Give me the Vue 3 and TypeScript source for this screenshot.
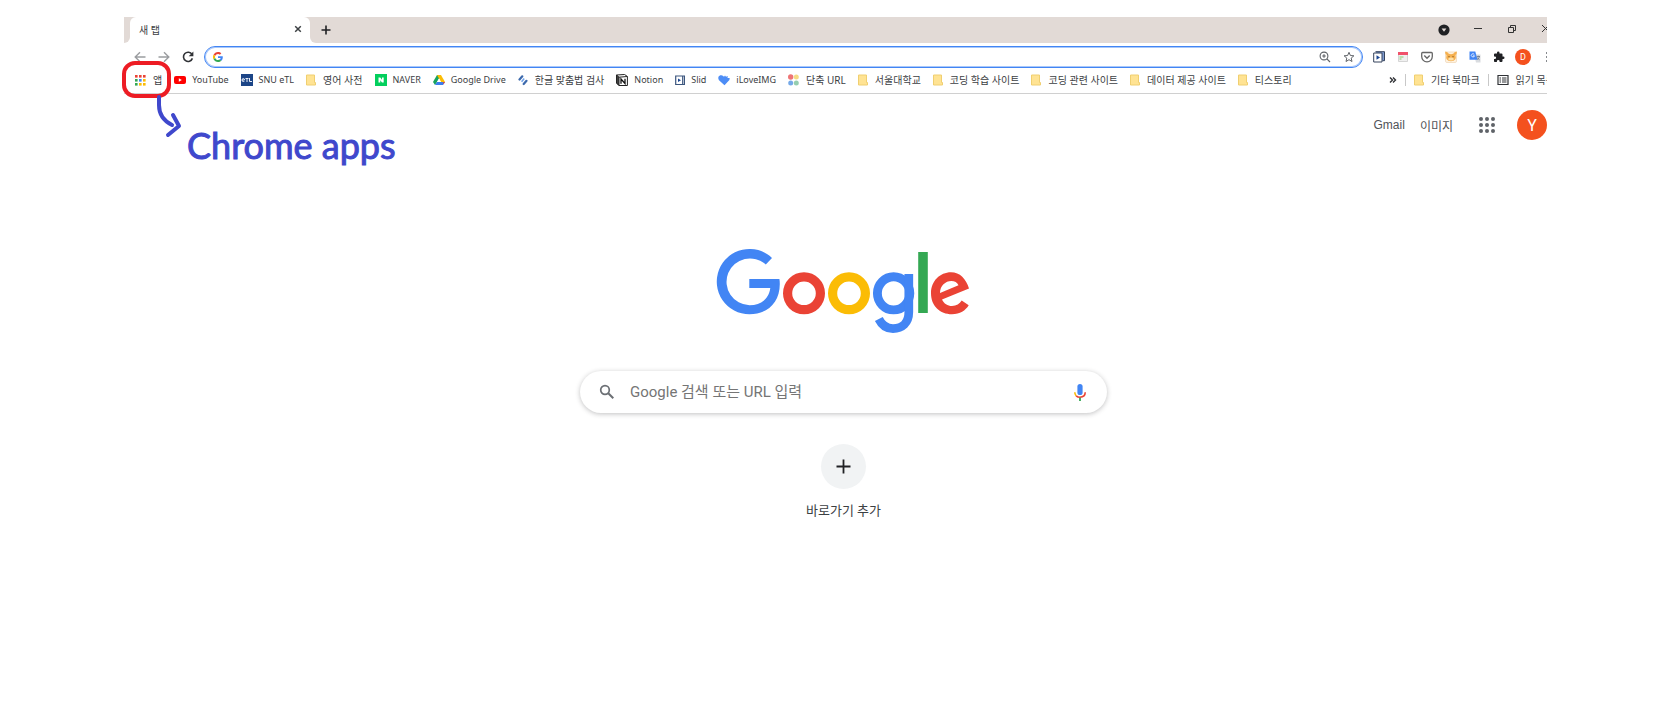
<script setup lang="ts">
interface Bookmark {
  icon: string
  label: string
  latin?: boolean
}

const bookmarks: Bookmark[] = [
  { icon: 'apps', label: '앱' },
  { icon: 'youtube', label: 'YouTube', latin: true },
  { icon: 'etl', label: 'SNU eTL', latin: true },
  { icon: 'folder', label: '영어 사전' },
  { icon: 'naver', label: 'NAVER', latin: true },
  { icon: 'drive', label: 'Google Drive', latin: true },
  { icon: 'spell', label: '한글 맞춤법 검사' },
  { icon: 'notion', label: 'Notion', latin: true },
  { icon: 'slid', label: 'Slid', latin: true },
  { icon: 'iloveimg', label: 'iLoveIMG', latin: true },
  { icon: 'url', label: '단축 URL' },
  { icon: 'folder', label: '서울대학교' },
  { icon: 'folder', label: '코딩 학습 사이트' },
  { icon: 'folder', label: '코딩 관련 사이트' },
  { icon: 'folder', label: '데이터 제공 사이트' },
  { icon: 'folder', label: '티스토리' },
]

const appColors: string[] = [
  '#ea4335', '#ea4335', '#ea4335',
  '#34a853', '#4285f4', '#fbbc05',
  '#34a853', '#fbbc05', '#fbbc05',
]
const cells: number[] = [0, 1, 2, 3, 4, 5, 6, 7, 8]
</script>

<template>
  <div class="stage">
    <div class="clip">
      <div class="browser">
        <header>
          <div class="tabs">
            <span class="prev-tab"></span>
            <div class="tab">
              <span class="tab-title">새 탭</span>
              <button class="tab-close" aria-label="탭 닫기">
                <svg width="8" height="8" viewBox="0 0 8 8"><path d="M1.2 1.2 6.8 6.8M6.8 1.2 1.2 6.8" stroke="#3c4043" stroke-width="1.5" /></svg>
              </button>
            </div>
            <div class="strip">
              <button class="new-tab" aria-label="새 탭 열기">
                <svg width="10" height="10" viewBox="0 0 10 10"><path d="M5 .5v9M.5 5h9" stroke="#202124" stroke-width="1.6" /></svg>
              </button>
              <div class="window-buttons">
                <button aria-label="탭 검색">
                  <svg width="12" height="12" viewBox="0 0 12 12"><circle cx="6" cy="6" r="5.6" fill="#202124" /><path d="M3.6 4.4h4.8L6 7.8z" fill="#e2dad6" /></svg>
                </button>
                <button aria-label="최소화">
                  <svg width="12" height="12" viewBox="0 0 12 12"><path d="M2 4.5h8" stroke="#333" /></svg>
                </button>
                <button aria-label="이전 크기로">
                  <svg width="12" height="12" viewBox="0 0 12 12"><path d="M2.5 3.5h5v5h-5zM4.5 3V1.5h5v5H8" fill="none" stroke="#333" /></svg>
                </button>
                <button aria-label="닫기">
                  <svg width="12" height="12" viewBox="0 0 12 12"><path d="M2 1 9 8M9 1 2 8" stroke="#333" /></svg>
                </button>
              </div>
            </div>
          </div>

          <div class="toolbar">
            <div class="nav">
              <button aria-label="뒤로">
                <svg width="12" height="12" viewBox="0 0 12 12"><path d="M11.5 6H1.5M6 1.2 1.2 6 6 10.8" fill="none" stroke="#9b9da0" stroke-width="1.4" /></svg>
              </button>
              <button aria-label="앞으로">
                <svg width="12" height="12" viewBox="0 0 12 12"><path d="M.5 6h10M6 1.2 10.8 6 6 10.8" fill="none" stroke="#9b9da0" stroke-width="1.4" /></svg>
              </button>
              <button aria-label="새로고침">
                <svg width="12" height="12" viewBox="0 0 12 12"><path d="M10 3.4A4.6 4.6 0 1 0 10.4 7.4" fill="none" stroke="#303236" stroke-width="1.6" /><path d="M11.4.6v4.700H6.700z" fill="#303236" /></svg>
              </button>
            </div>
            <div class="omnibox">
              <svg width="10" height="10" viewBox="0 0 48 48">
                <path fill="#ea4335" d="M24 9.5c3.5 0 6.700 1.200 9.200 3.600l6.900-6.900C35.900 2.400 30.500 0 24 0 14.600 0 6.500 5.400 2.600 13.200l8 6.200C12.400 13.700 17.700 9.500 24 9.500z" />
                <path fill="#4285f4" d="M47 24.600c0-1.600-.2-3.100-.4-4.600H24v9h12.900c-.6 3-2.300 5.500-4.800 7.200l7.700 6C44.400 38 47 31.800 47 24.600z" />
                <path fill="#fbbc05" d="M10.500 28.600a14.500 14.500 0 0 1 0-9.200l-8-6.200a24 24 0 0 0 0 21.600z" />
                <path fill="#34a853" d="M24 48c6.500 0 11.900-2.100 15.900-5.800l-7.700-6c-2.200 1.500-4.900 2.300-8.200 2.300-6.300 0-11.600-4.200-13.500-9.900l-8 6.200C6.500 42.600 14.600 48 24 48z" />
              </svg>
              <input type="text" aria-label="주소창" />
              <button aria-label="확대">
                <svg width="12" height="12" viewBox="0 0 12 12"><circle cx="5" cy="5" r="3.900" fill="none" stroke="#5f6368" stroke-width="1.1" /><path d="M7.900 7.900 11 11M3.200 5h3.600M5 3.200v3.600" stroke="#5f6368" stroke-width="1.200" /></svg>
              </button>
              <button aria-label="북마크 추가">
                <svg width="12" height="12" viewBox="0 0 12 12"><path d="m6 1.300 1.400 3.200 3.500.3-2.700 2.300.8 3.400L6 8.700l-3 1.800.8-3.400L1.100 4.800l3.500-.3z" fill="none" stroke="#5f6368" /></svg>
              </button>
            </div>
            <div class="extensions">
              <button aria-label="Slid">
                <svg width="12" height="12" viewBox="0 0 12 12"><path d="M2.500.7h9v9h-2" fill="#7f9bd0" stroke="#35435c" /><path d="M.7 2h8.300v9H.7z" fill="#fff" stroke="#35435c" /><path d="m3.500 4.300 3.500 2.200-3.500 2.200z" fill="#1b4691" /></svg>
              </button>
              <button aria-label="메모">
                <svg width="12" height="12" viewBox="0 0 12 12"><path d="M1.500 1.500h9v9h-9z" fill="#f0f0f0" stroke="#d5d5d5" /><path d="M1 1h10v3H1z" fill="#f0526a" /><path d="M2.500 6h4M2.500 8h2" stroke="#83cc6b" stroke-width="1.200" /></svg>
              </button>
              <button aria-label="Pocket">
                <svg width="12" height="12" viewBox="0 0 12 12"><path d="M1.600 1.500h8.800q.9 0 .9.900v3.200a5.300 5.300 0 0 1-10.600 0V2.400q0-.9.900-.9z" fill="none" stroke="#666" stroke-width="1.300" /><path d="M3.300 4.600 6 7.200l2.700-2.600" fill="none" stroke="#666" stroke-width="1.400" /></svg>
              </button>
              <button aria-label="고양이">
                <svg width="12" height="12" viewBox="0 0 12 12"><rect x=".5" y="1" width="11" height="10.500" rx="1.500" fill="#fff2df" stroke="#f3dfc5" /><path d="M0 .5Q2.500.5 3.500 2.500 6 4 8.500 2.500 9.500.5 12 .5q0 2.500-1.500 3.500 1.500 6-4.500 6.200Q0 10 1.500 4 0 3 0 .5z" fill="#f5b04f" /><path d="M4 5.200v1M8 5.200v1" stroke="#6a4216" /><ellipse cx="6" cy="8" rx="2.800" ry="1.500" fill="#fde0a9" /></svg>
              </button>
              <button aria-label="번역">
                <svg width="12" height="12" viewBox="0 0 12 12"><path d="M5 3.500h6.500v8H7z" fill="#d9dce0" /><path d="M.5.500h5.800l2.200 8.300h-8z" fill="#4285f4" /><path d="M5.300 3.500a1.600 1.600 0 1 0 .2 1.300H4" fill="none" stroke="#fff" stroke-width=".8" /><path d="M7.700 5.500H11M9.300 4.700v.8M10.500 5.500q-.4 2-2.200 3.100M8.300 6.500q.7 1.700 2.300 2.300" fill="none" stroke="#697686" stroke-width=".8" /></svg>
              </button>
              <button aria-label="확장 프로그램">
                <svg width="12" height="12" viewBox="0 0 24 24"><path fill="#202124" d="M20.500 11H19V7a2 2 0 0 0-2-2h-4V3.500a2.500 2.500 0 0 0-5 0V5H4a2 2 0 0 0-2 2v3.800h1.500a2.700 2.700 0 0 1 0 5.400H2V20c0 1.100.9 2 2 2h3.800v-1.500a2.700 2.700 0 0 1 5.400 0V22H17a2 2 0 0 0 2-2v-4h1.500a2.500 2.500 0 0 0 0-5z" /></svg>
              </button>
              <button class="profile" aria-label="프로필">D</button>
              <button aria-label="메뉴">
                <svg width="12" height="12" viewBox="0 0 12 12" fill="#5f6368"><circle cx="6" cy="2" r="1" /><circle cx="6" cy="6" r="1" /><circle cx="6" cy="10" r="1" /></svg>
              </button>
            </div>
          </div>

          <nav class="bookmarks">
            <a v-for="b in bookmarks" :key="b.label" href="#" :class="{ latin: b.latin }">
              <svg v-if="b.icon === 'apps'" width="11" height="12" viewBox="0 0 11 12">
                <rect v-for="n in cells" :key="n" :x="(n % 3) * 4" :y="Math.floor(n / 3) * 4 + 1" width="2.600" height="2.600" :fill="appColors[n]" />
              </svg>
              <svg v-else-if="b.icon === 'youtube'" width="12" height="12" viewBox="0 0 12 12"><rect y="2" width="12" height="8" rx="2" fill="#f00" /><path d="m4.800 4.200 3 1.800-3 1.800z" fill="#fff" /></svg>
              <svg v-else-if="b.icon === 'etl'" width="12" height="12" viewBox="0 0 12 12"><path d="M0 0h12v12H0z" fill="#1c4587" /><path d="M1 6h2.500q0-1.500-1.200-1.500T1 6t1.300 1.500h1M4.500 4.500h3M6 4.500v3.500M8.500 4v3.500H11" fill="none" stroke="#e8eef8" /></svg>
              <svg v-else-if="b.icon === 'folder'" width="10" height="12" viewBox="0 0 10 12"><path d="M.5 1h8v7.500h1V11h-9z" fill="#ffe393" stroke="#f0cf70" /></svg>
              <svg v-else-if="b.icon === 'naver'" width="12" height="12" viewBox="0 0 12 12"><path d="M0 0h12v12H0z" fill="#03cf5d" /><path d="M3.500 3.500h1.800l1.700 2.300V3.500h1.700v5H7L5.300 6.200v2.300H3.500z" fill="#fff" /></svg>
              <svg v-else-if="b.icon === 'drive'" width="12" height="12" viewBox="0 0 12 12"><path d="M4 1h4L4 8l-2 3-2-3z" fill="#18a35d" /><path d="M4 1h4l4 7H8z" fill="#fbbc05" /><path d="M4 8h8l-2 3H2z" fill="#3b7ded" /><path d="M10.200 8H12l-1.500 2.500z" fill="#ea4335" /><path d="M6 4.600 8 8H4z" fill="#fff" /></svg>
              <svg v-else-if="b.icon === 'spell'" width="10" height="12" viewBox="0 0 10 12"><path d="M1.500 5.500 4.300 2.300M5.700 10 8.500 6.800" stroke="#3c69ac" stroke-width="2.200" stroke-linecap="round" /><path d="m3.600 7.700 2.600-3.200" stroke="#70a2ea" stroke-width="1.500" /></svg>
              <svg v-else-if="b.icon === 'notion'" width="12" height="12" viewBox="0 0 12 12"><path d="m.6 1 8-.5 2.800 2v9H3L.6 9z" fill="#fff" stroke="#222" /><path d="M.6 1 3 3.200v8.300L.6 9zM3 3.200l8.400-.7" fill="#444" stroke="#222" /><path d="M5 9.700V5l4 4.500V4.700" fill="none" stroke="#111" stroke-width="1.300" /></svg>
              <svg v-else-if="b.icon === 'slid'" width="10" height="12" viewBox="0 0 10 12"><path d="M.7 2h7v8.500h-7zM7.700 2h1.800v8.500H7.700" fill="#fff" stroke="#3c567e" stroke-width="1.200" /><path d="m3 4.500 3 1.700L3 8z" fill="#1b4691" /></svg>
              <svg v-else-if="b.icon === 'iloveimg'" width="12" height="12" viewBox="0 0 12 12"><path d="M6.500 11.300 1 6.300Q-1 2.500 2.300 1.300q2.500-.6 3.700 1.500L7 1.500l1 1.300 1.800-.8-.3 2h2.200L11.400 6z" fill="#4d8df6" /></svg>
              <svg v-else width="11" height="12" viewBox="0 0 11 12"><circle cx="2.700" cy="3" r="2.700" fill="#ee7576" /><circle cx="8.300" cy="3" r="2.500" fill="#f5db83" /><circle cx="2.700" cy="9" r="2.500" fill="#75a9e8" /><circle cx="8.300" cy="9" r="2.500" fill="#95ceb0" /></svg>
              <span>{{ b.label }}</span>
            </a>
            <div class="bookmark-end">
              <button class="more" aria-label="북마크 더보기">
                <svg width="8" height="8" viewBox="0 0 8 8"><path d="M1 1.500 3.500 4 1 6.500M4 1.500 6.500 4 4 6.500" fill="none" stroke="#303236" stroke-width="1.400" /></svg>
              </button>
              <i></i>
              <a href="#">
                <svg width="10" height="12" viewBox="0 0 10 12"><path d="M.5 1h8v7.500h1V11h-9z" fill="#ffe393" stroke="#f0cf70" /></svg>
                <span>기타 북마크</span>
              </a>
              <i></i>
              <a href="#">
                <svg width="12" height="12" viewBox="0 0 12 12"><path d="M1 1.500h10v9H1z" fill="none" stroke="#303236" stroke-width="1.200" /><path d="M2.500 4H4M5 4h4.500M2.500 6H4M5 6h4.500M2.500 8H4M5 8h4.500" stroke="#303236" /></svg>
                <span>읽기 목록</span>
              </a>
            </div>
          </nav>
        </header>

        <main>
          <div class="account">
            <a href="#">Gmail</a>
            <a href="#">이미지</a>
            <button class="launcher" aria-label="Google 앱">
              <svg width="16" height="16" viewBox="0 0 16 16" fill="#5f6368">
                <circle v-for="n in cells" :key="n" :cx="(n % 3) * 6 + 2" :cy="Math.floor(n / 3) * 6 + 2" r="2" />
              </svg>
            </button>
            <button class="avatar" aria-label="Google 계정">Y</button>
          </div>

          <svg class="logo" role="img" aria-label="Google" viewBox="717 248 254 85">
            <path fill="#4285f4" d="M772 256.900 765.800 263.600A23.400 23.400 0 1 0 749.500 304.200C762 304.200 769 297 770.300 287H749.300V278H779.400C779.700 279.500 779.800 281 779.800 283C779.800 302 767 313.300 749.500 313.300A32.700 32.700 0 1 1 772 256.900Z" />
            <circle cx="804" cy="292.300" r="16.400" fill="none" stroke="#ea4335" stroke-width="9.200" />
            <circle cx="849" cy="292.300" r="16.400" fill="none" stroke="#fbbc05" stroke-width="9.200" />
            <ellipse cx="893.600" cy="292.300" rx="16.200" ry="16.600" fill="none" stroke="#4285f4" stroke-width="8.900" />
            <path d="M908.800 273V311C908.800 322 902 327.600 893 327.600C886 327.600 881.500 323.500 878.800 318" fill="none" stroke="#4285f4" stroke-width="8.700" />
            <path fill="#34a853" d="M918.200 251H927.800V312H918.200Z" />
            <path fill="#ea4335" fill-rule="evenodd" d="M969 287.500C966 278 960 271.300 951 271.300C940 271.300 931 280 931 292.300C931 305 940 313.300 952 313.300C960 313.300 965.500 309.500 968.700 304.300L961.700 299.600C959.500 303 956.500 305 952 305C947.500 305 944 302.700 942 298.500ZM940 292 958.500 284.200C957.500 281.500 954.500 280 951.300 280C945.500 280 940 284.800 940 292Z" />
          </svg>

          <form class="search" @submit.prevent>
            <svg width="16" height="16" viewBox="0 0 16 16"><circle cx="6" cy="6" r="4.300" fill="none" stroke="#6b6f74" stroke-width="1.700" /><path d="m9.300 9.300 5 5" stroke="#6b6f74" stroke-width="2" /></svg>
            <input type="text" placeholder="Google 검색 또는 URL 입력" aria-label="검색" />
            <button type="button" aria-label="음성 검색">
              <svg width="12" height="18" viewBox="0 0 12 18"><rect x="3.400" y="1" width="5.200" height="11" rx="2.600" fill="#4285f4" /><path d="M.8 9.300q0 2.100 1.400 3.600" fill="none" stroke="#fbbc05" stroke-width="1.600" /><path d="M2.200 12.900Q3.600 14.300 6 14.300q5.200-.3 5.200-5" fill="none" stroke="#ea4335" stroke-width="1.600" /><path d="M6 14.800V18" stroke="#34a853" stroke-width="1.800" /></svg>
            </button>
          </form>

          <button class="shortcut">
            <span class="plus">
              <svg width="15" height="15" viewBox="0 0 15 15"><path d="M7.500 .5v14M.5 7.500h14" stroke="#202124" stroke-width="1.800" /></svg>
            </span>
            <span>바로가기 추가</span>
          </button>
        </main>
      </div>
    </div>

    <div class="ring"></div>
    <svg class="arrow" width="28" height="46" viewBox="156 94 28 46"><path d="M159 97V105C159 115 164 121 172 125M173 115 179 126 168 135" fill="none" stroke="#3f48cc" stroke-width="4" stroke-linecap="round" stroke-linejoin="round" /></svg>
    <span class="note">Chrome apps</span>
  </div>
</template>

<style>
body {
  margin: 0;
  background: #fff;
}
</style>

<style scoped>
.stage {
  position: relative;
  padding: 17px 120px 0 124px;
  font-family: "Noto Sans", "Noto Sans CJK KR", sans-serif;
  font-size: 10px;
  color: #3c4043;
}
.clip {
  overflow: hidden;
}
.browser {
  margin-right: -16px;
}
button {
  display: flex;
  align-items: center;
  justify-content: center;
  padding: 0;
  border: 0;
  background: none;
  font: inherit;
  color: inherit;
}
svg {
  display: block;
  flex: none;
}
a {
  color: inherit;
  text-decoration: none;
}
.tabs {
  display: flex;
  height: 26px;
  background: linear-gradient(#e2dad6 50%, #fff 50%);
}
.prev-tab {
  width: 6px;
  background: #e2dad6;
  border-bottom-right-radius: 6px;
}
.tab {
  display: flex;
  align-items: center;
  justify-content: space-between;
  width: 180px;
  padding: 0 8px 2px 9px;
  box-sizing: border-box;
  background: #fff;
  border-radius: 6px 6px 0 0;
}
.strip {
  display: flex;
  flex: 1;
  align-items: center;
  justify-content: space-between;
  padding: 0 11px 0 11px;
  background: #e2dad6;
  border-bottom-left-radius: 6px;
}
.window-buttons {
  display: flex;
  gap: 22px;
}
.toolbar {
  display: flex;
  align-items: center;
  height: 26px;
  padding: 1px 10px 0;
  box-sizing: border-box;
}
.nav {
  display: flex;
  gap: 12px;
  margin-right: 10px;
}
.omnibox {
  display: flex;
  flex: 1;
  align-items: center;
  gap: 12px;
  height: 22px;
  padding: 0 7px 0 8px;
  box-sizing: border-box;
  border: 1px solid #4285f4;
  box-shadow: inset 0 0 0 1px #a9c8fa;
  border-radius: 11px;
}
.omnibox input {
  flex: 1;
  min-width: 0;
  padding: 0;
  border: 0;
  outline: 0;
  background: none;
  font: inherit;
}
.extensions {
  display: flex;
  align-items: center;
  gap: 12px;
  margin-left: 10px;
}
.profile {
  width: 16px;
  height: 16px;
  margin: 0 -2px;
  border-radius: 50%;
  background: #f4511e;
  color: #fff;
  font-family: Roboto, sans-serif;
  font-size: 9px;
}
.bookmarks {
  display: flex;
  align-items: center;
  gap: 12px;
  height: 25px;
  padding: 0 0 2px 11px;
  box-sizing: border-box;
  border-bottom: 1px solid #d0d0d0;
  line-height: 16px;
  white-space: nowrap;
}
.bookmarks a {
  display: flex;
  align-items: center;
  gap: 7px;
}
.bookmarks .latin {
  gap: 6px;
  font-size: 9px;
}
.bookmark-end {
  display: flex;
  align-items: center;
  gap: 8px;
  margin-left: auto;
  margin-right: 8px;
}
.bookmark-end i {
  width: 1px;
  height: 12px;
  background: #c8c8c8;
}
main {
  display: flex;
  flex-direction: column;
  align-items: center;
}
.account {
  display: flex;
  align-items: center;
  align-self: flex-end;
  gap: 15px;
  height: 30px;
  margin: 16px 16px 0 0;
  font: 12px "Liberation Sans", "Noto Sans CJK KR", sans-serif;
  color: #505357;
}
.launcher {
  margin: 0 7px 0 11px;
}
.avatar {
  width: 30px;
  height: 30px;
  border-radius: 50%;
  background: #f4511e;
  color: #fff;
  font: 16px Roboto, sans-serif;
}
.logo {
  width: 254px;
  height: 85px;
  margin-top: 109px;
  overflow: visible;
}
.search {
  display: flex;
  align-items: center;
  gap: 15px;
  width: 527px;
  height: 42px;
  margin-top: 37px;
  padding: 0 21px 0 19px;
  box-sizing: border-box;
  border-radius: 21px;
  box-shadow: 0 1px 5px rgba(32, 33, 36, 0.28);
}
.search input {
  flex: 1;
  min-width: 0;
  padding: 0;
  border: 0;
  outline: 0;
  background: none;
  font: 15px Roboto, "Noto Sans CJK KR", sans-serif;
}
.search input::placeholder {
  color: #757575;
  opacity: 1;
}
.shortcut {
  flex-direction: column;
  gap: 12px;
  margin-top: 31px;
  font: 13px/20px Roboto, "Noto Sans CJK KR", sans-serif;
}
.plus {
  display: flex;
  align-items: center;
  justify-content: center;
  width: 45px;
  height: 45px;
  border-radius: 50%;
  background: #f1f3f4;
}
.ring {
  position: absolute;
  left: 122px;
  top: 61px;
  width: 49px;
  height: 37px;
  box-sizing: border-box;
  border: 4px solid #ed1c24;
  border-radius: 13px;
}
.arrow {
  position: absolute;
  left: 156px;
  top: 94px;
}
.note {
  position: absolute;
  left: 187px;
  top: 121px;
  font: 36px/48px Lato, sans-serif;
  color: #3f48cc;
  -webkit-text-stroke: 1px #3f48cc;
  white-space: nowrap;
}
</style>
